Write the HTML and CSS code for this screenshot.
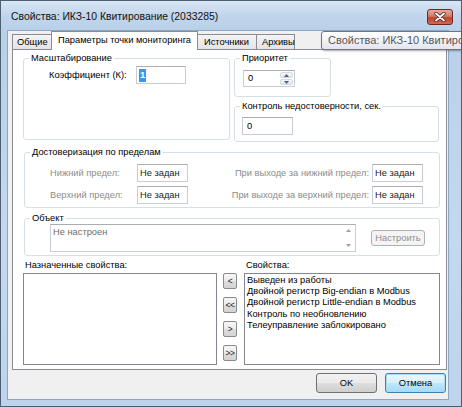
FILE: index.html
```html
<!DOCTYPE html>
<html lang="ru">
<head>
<meta charset="utf-8">
<title>Свойства: ИКЗ-10 Квитирование (2033285)</title>
<link rel="stylesheet" href="styles.css">
</head>
<body>
<div class="window">
  <div class="titlebar">
    <span class="title">Свойства: ИКЗ-10 Квитирование (2033285)</span>
    <span class="close">
      <svg width="12" height="10" viewBox="0 0 12 10"><path d="M2 1.5 L10 8.5 M10 1.5 L2 8.5" stroke="#3b1d1d" stroke-width="3.2" stroke-linecap="round"/><path d="M2 1.5 L10 8.5 M10 1.5 L2 8.5" stroke="#fff" stroke-width="1.8" stroke-linecap="round"/></svg>
    </span>
  </div>
  <div class="client">
    <div class="tabs">
      <div class="tab">Общие</div>
      <div class="tab active">Параметры точки мониторинга</div>
      <div class="tab">Источники</div>
      <div class="tab">Архивы</div>
    </div>
    <div class="panel">
      <div class="row1">
        <div class="group g-scale">
          <div class="gtitle">Масштабирование</div>
          <div class="field f-scale">
            <span class="lbl">Коэффициент (К):</span>
            <span class="input in-k"><span class="sel">1</span></span>
          </div>
        </div>
        <div class="col">
          <div class="group g-prio">
            <div class="gtitle">Приоритет</div>
            <div class="spin">
              <span class="spin-text">0</span>
              <span class="spin-btns">
                <span class="sb"><svg width="5" height="3" viewBox="0 0 5 3"><path d="M0 3 L2.5 0 L5 3Z" fill="#4d6185"/></svg></span>
                <span class="sb"><svg width="5" height="3" viewBox="0 0 5 3"><path d="M0 0 L2.5 3 L5 0Z" fill="#4d6185"/></svg></span>
              </span>
            </div>
          </div>
          <div class="group g-ctrl">
            <div class="gtitle">Контроль недостоверности, сек.</div>
            <span class="input in-ctrl">0</span>
          </div>
        </div>
      </div>

      <div class="group g-limits">
        <div class="gtitle">Достоверизация по пределам</div>
        <div class="limits">
          <span class="lbl dis">Нижний предел:</span>
          <span class="input in-lim">Не задан</span>
          <span class="lbl dis rl">При выходе за нижний предел:</span>
          <span class="input in-lim">Не задан</span>
          <span class="lbl dis">Верхний предел:</span>
          <span class="input in-lim">Не задан</span>
          <span class="lbl dis rl">При выходе за верхний предел:</span>
          <span class="input in-lim">Не задан</span>
        </div>
      </div>

      <div class="group g-obj">
        <div class="gtitle">Объект</div>
        <div class="obj-row">
          <div class="obj-box">
            <span class="obj-text">Не настроен</span>
            <span class="obj-scroll">
              <svg width="5" height="3" viewBox="0 0 5 3"><path d="M0 3 L2.5 0 L5 3Z" fill="#a0a0a0"/></svg>
              <svg width="5" height="3" viewBox="0 0 5 3"><path d="M0 0 L2.5 3 L5 0Z" fill="#a0a0a0"/></svg>
            </span>
          </div>
          <span class="btn btn-dis">Настроить</span>
        </div>
      </div>

      <div class="lists">
        <div class="list-head">Назначенные свойства:</div>
        <div></div>
        <div class="list-head h-right">Свойства:</div>
        <div class="list"></div>
        <div class="movers">
          <span class="mbtn">&lt;</span>
          <span class="mbtn">&lt;&lt;</span>
          <span class="mbtn">&gt;</span>
          <span class="mbtn">&gt;&gt;</span>
        </div>
        <div class="list list-r">
          <div>Выведен из работы</div>
          <div>Двойной регистр Big-endian в Modbus</div>
          <div>Двойной регистр Little-endian в Modbus</div>
          <div>Контроль по необновлению</div>
          <div>Телеуправление заблокировано</div>
        </div>
      </div>
    </div>
    <div class="footer">
      <span class="btn btn-ok">OK</span>
      <span class="btn btn-default">Отмена</span>
    </div>
  </div>
  <div class="tooltip">Свойства: ИКЗ-10 Квитирование (2033285)</div>
</div>
</body>
</html>
```

FILE: styles.css
```css
* { box-sizing: border-box; }
html, body { margin: 0; padding: 0; }
body {
  width: 462px;
  height: 407px;
  overflow: hidden;
  background: #ffffff;
  font-family: "Liberation Sans", Arial, sans-serif;
  font-size: 9.3px;
  color: #000;
}
.window {
  position: relative;
  width: 462px;
  height: 407px;
  border: 1px solid #4e5f72;
  background: linear-gradient(to bottom, #d9e6f5 0px, #c1d6ec 14px, #b9d0e9 29px, #c4d9ef 60%, #bdd4ec 100%);
  display: flex;
  flex-direction: column;
  overflow: hidden;
}
.titlebar {
  height: 29px;
  display: flex;
  align-items: center;
  padding-left: 10px;
  padding-right: 8px;
}
.title {
  font-size: 10.4px;
  color: #111;
  flex: 1;
  margin-top: 2px;
}
.close {
  width: 26px;
  height: 16px;
  margin-top: 2px;
  border: 1px solid #6b2a26;
  border-radius: 3px;
  background: linear-gradient(to bottom, #e6a99c 0%, #d0776a 45%, #c1442f 55%, #d2684f 100%);
  display: flex;
  align-items: center;
  justify-content: center;
}
.client {
  margin: 0 12px 6px 6px;
  height: 370px;
  background: #f0f0f0;
  border: 1px solid #8fa6c0;
  display: flex;
  flex-direction: column;
}
.tabs {
  display: flex;
  align-items: flex-end;
  height: 18px;
  padding-left: 4px;
  position: relative;
  z-index: 1;
}
.tab {
  height: 15px;
  padding: 0 4px;
  border: 1px solid #898c95;
  border-bottom: none;
  margin-right: -1px;
  background: linear-gradient(to bottom, #f4f4f4, #e4e4e4);
  line-height: 14px;
  white-space: nowrap;
}
.tab:first-child { width: 40px; }
.tab.active {
  height: 19px;
  margin-bottom: -1px;
  background: #fff;
  width: 147px;
  padding-left: 6px;
  line-height: 17px;
}
.tab:nth-child(3) { width: 60px; padding-left: 6px; }
.tab:nth-child(4) { width: 39px; padding-left: 5px; }
.panel {
  margin-left: 4px;
  width: 435px;
  height: 321px;
  background: #fff;
  border: 1px solid #898c95;
}
.group {
  border: 1px solid #d5dfe5;
  border-radius: 3px;
}
.gtitle {
  display: table;
  background: #fff;
  line-height: 12px;
  margin: -7px 0 -5px 5px;
  padding: 0 2px;
  white-space: nowrap;
}
.row1 {
  display: flex;
  margin-top: 8px;
  margin-left: 10px;
}
.g-scale { width: 207px; height: 82px; }
.f-scale {
  display: flex;
  align-items: center;
  margin-top: 7px;
  margin-left: 25px;
}
.f-scale .lbl { width: 87px; }
.input {
  display: flex;
  align-items: center;
  height: 18px;
  border: 1px solid #c8cdd5;
  border-top-color: #abadb3;
  background: #fff;
  padding-left: 3px;
  white-space: nowrap;
}
.in-k { width: 50px; padding-left: 2px; }
.sel {
  background: #3399ff;
  color: #fff;
  padding: 0 1px;
  line-height: 13px;
  font-weight: bold;
}
.col {
  margin-left: 4px;
  display: flex;
  flex-direction: column;
}
.g-prio { width: 97px; height: 39px; }
.spin {
  display: flex;
  width: 52px;
  height: 17px;
  margin: 11px 0 0 8px;
  border: 1px solid #c8cdd5;
  border-top-color: #abadb3;
  background: #fff;
}
.spin-text { flex: 1; padding-left: 4px; line-height: 15px; }
.spin-btns { display: flex; flex-direction: column; width: 15px; padding: 1px; gap: 1px; }
.sb {
  flex: 1;
  display: flex;
  align-items: center;
  justify-content: center;
  border: 1px solid #d6d9de;
  border-radius: 2px;
  background: linear-gradient(to bottom, #f7f7f7, #e6e6e6);
}
.g-ctrl { width: 205px; height: 36px; margin-top: 9px; }
.in-ctrl { width: 51px; height: 18px; margin: 10px 0 0 7px; padding-left: 4px; }
.g-limits {
  width: 416px;
  height: 56px;
  margin: 10px 0 0 11px;
}
.limits {
  display: grid;
  grid-template-columns: 87px 51px 184px 53px;
  grid-template-rows: 18px 20px;
  row-gap: 3px;
  align-items: center;
  margin: 11px 0 0 25px;
}
.limits .input { height: 18px; padding-left: 2px; color: #1a1a1a; }
.lbl.dis { color: #8c8c8c; }
.lbl.rl { text-align: right; padding-right: 3px; }
.in-lim { width: 51px; }
.g-obj {
  width: 416px;
  height: 38px;
  margin: 10px 0 0 11px;
}
.obj-row {
  display: flex;
  align-items: center;
  margin: 5px 0 0 25px;
}
.obj-box {
  width: 306px;
  height: 28px;
  display: flex;
  border: 1px solid #c8cdd5;
  border-top-color: #abadb3;
  background: #fff;
}
.obj-text { flex: 1; color: #6d6d6d; padding: 2px 0 0 2px; }
.obj-scroll {
  width: 14px;
  display: flex;
  flex-direction: column;
  justify-content: space-between;
  align-items: center;
  padding: 4px 0 4px;
}
.btn {
  display: flex;
  align-items: center;
  justify-content: center;
  border: 1px solid #707070;
  border-radius: 3px;
  background: linear-gradient(to bottom, #f2f2f2 0%, #ebebeb 48%, #dddddd 52%, #cfcfcf 100%);
  white-space: nowrap;
}
.btn-dis {
  margin-left: 15px;
  width: 54px;
  height: 16px;
  border-color: #adb2b5;
  background: #f4f4f4;
  color: #8f8f8f;
}
.lists {
  display: grid;
  grid-template-columns: 194px 27px 196px;
  grid-template-rows: 17px 92px;
  margin-left: 10px;
}
.list-head { display: flex; align-items: center; padding-left: 2px; padding-top: 1px; }
.h-right { padding-left: 2px; }
.list {
  border: 1px solid #828790;
  background: #fff;
}
.list-r { padding: 1px 0 0 2px; line-height: 11.2px; }
.movers {
  display: flex;
  flex-direction: column;
  align-items: flex-start;
  padding: 0 0 0 6px;
  gap: 8px;
}
.mbtn {
  width: 14px;
  height: 16px;
  border: 1px solid #8a8a8a;
  border-radius: 2px;
  background: linear-gradient(to bottom, #f6f6f6 0%, #ececec 48%, #dedede 52%, #d3d3d3 100%);
  display: flex;
  align-items: center;
  justify-content: center;
  font-size: 8.5px;
  letter-spacing: -0.5px;
  color: #222;
}
.footer {
  display: flex;
  justify-content: flex-end;
  gap: 8px;
  padding-right: 2px;
  margin-top: 3px;
}
.btn-ok, .btn-default { width: 61px; height: 20px; }
.btn-default {
  border-color: #3c7fb1;
  box-shadow: inset 0 0 0 1px #a7dcf7;
  background: linear-gradient(to bottom, #eaf6fd 0%, #d9f0fc 48%, #bee6fd 52%, #a7d9f5 100%);
}
.tooltip {
  position: absolute;
  left: 320px;
  top: 30px;
  height: 19px;
  padding: 0 6px;
  border: 1px solid #767676;
  border-radius: 3px;
  background: linear-gradient(to bottom, #ffffff, #e4e5f0);
  box-shadow: 1px 1px 2px rgba(0,0,0,0.35);
  color: #575757;
  font-size: 11px;
  line-height: 17px;
  white-space: nowrap;
}
```
